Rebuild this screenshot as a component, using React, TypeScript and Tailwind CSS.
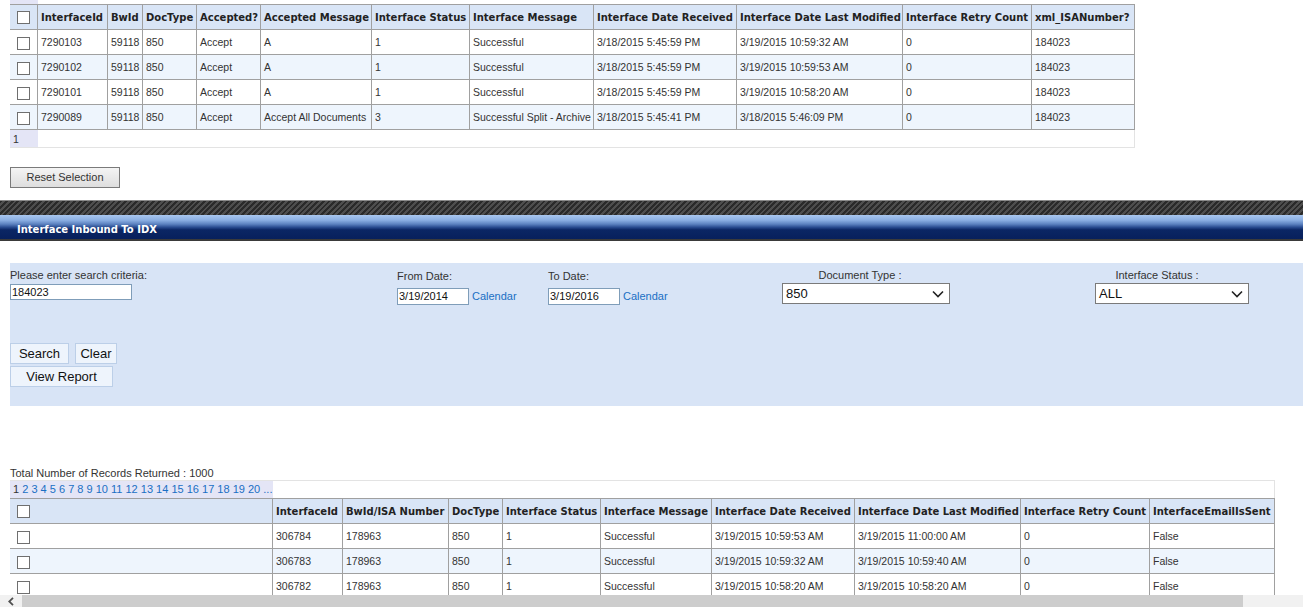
import React from "react";

const topCols = [
  "w-[28px]", "w-[70px]", "w-[35px]", "w-[54px]", "w-[64px]", "w-[111px]",
  "w-[98px]", "w-[124px]", "w-[143px]", "w-[166px]", "w-[129px]", "w-[103px]",
];
const topHeaders = [
  "InterfaceId", "BwId", "DocType", "Accepted?", "Accepted Message", "Interface Status",
  "Interface Message", "Interface Date Received", "Interface Date Last Modified",
  "Interface Retry Count", "xml_ISANumber?",
];
const topRows = [
  ["7290103", "59118", "850", "Accept", "A", "1", "Successful", "3/18/2015 5:45:59 PM", "3/19/2015 10:59:32 AM", "0", "184023"],
  ["7290102", "59118", "850", "Accept", "A", "1", "Successful", "3/18/2015 5:45:59 PM", "3/19/2015 10:59:53 AM", "0", "184023"],
  ["7290101", "59118", "850", "Accept", "A", "1", "Successful", "3/18/2015 5:45:59 PM", "3/19/2015 10:58:20 AM", "0", "184023"],
  ["7290089", "59118", "850", "Accept", "Accept All Documents", "3", "Successful Split - Archive", "3/18/2015 5:45:41 PM", "3/18/2015 5:46:09 PM", "0", "184023"],
];

const botCols = [
  "w-[263px]", "w-[70px]", "w-[106px]", "w-[54px]", "w-[98px]", "w-[111px]",
  "w-[143px]", "w-[166px]", "w-[129px]", "w-[125px]",
];
const botHeaders = [
  "InterfaceId", "BwId/ISA Number", "DocType", "Interface Status", "Interface Message",
  "Interface Date Received", "Interface Date Last Modified", "Interface Retry Count", "InterfaceEmailIsSent",
];
const botRows = [
  ["306784", "178963", "850", "1", "Successful", "3/19/2015 10:59:53 AM", "3/19/2015 11:00:00 AM", "0", "False"],
  ["306783", "178963", "850", "1", "Successful", "3/19/2015 10:59:32 AM", "3/19/2015 10:59:40 AM", "0", "False"],
  ["306782", "178963", "850", "1", "Successful", "3/19/2015 10:58:20 AM", "3/19/2015 10:58:20 AM", "0", "False"],
];

const thCls =
  "h-[26px] p-0 pl-[3px] border-t border-b border-r border-[#a0a0a0] bg-[#d9e5f6] text-left align-middle font-bold font-['DejaVu_Sans',sans-serif] text-[10px] text-[#222] whitespace-nowrap overflow-hidden";
const tdCls =
  "h-[25px] p-0 pt-[2px] pl-[3px] border-b border-r border-[#a0a0a0] text-left align-middle text-[10.5px] text-[#333] whitespace-nowrap overflow-hidden";

function Check() {
  return <span className="block w-[13px] h-[13px] border border-[#6f6f6f] bg-white" />;
}

function Chevron() {
  return (
    <svg width="12" height="8" viewBox="0 0 12 8" className="shrink-0">
      <polyline points="1,1.5 6,6.5 11,1.5" fill="none" stroke="#222" strokeWidth="1.6" />
    </svg>
  );
}

function Grid({
  cols, headers, rows,
}: { cols: string[]; headers: string[]; rows: string[][] }) {
  return (
    <table className="table-fixed border-separate border-spacing-0">
      <colgroup>
        {cols.map((c, i) => (
          <col key={i} className={c} />
        ))}
      </colgroup>
      <thead>
        <tr>
          <th className={thCls + " pl-[7px]"}>
            <Check />
          </th>
          {headers.map((h) => (
            <th key={h} className={thCls}>
              {h}
            </th>
          ))}
        </tr>
      </thead>
      <tbody>
        {rows.map((r, ri) => (
          <tr key={ri} className={ri % 2 === 1 ? "bg-[#eef5fd]" : "bg-white"}>
            <td className={tdCls + " pl-[7px]"}>
              <Check />
            </td>
            {r.map((v, ci) => (
              <td key={ci} className={tdCls}>
                {v}
              </td>
            ))}
          </tr>
        ))}
      </tbody>
    </table>
  );
}

export default function App() {
  const pages = ["2", "3", "4", "5", "6", "7", "8", "9", "10", "11", "12", "13", "14", "15", "16", "17", "18", "19", "20", "..."];
  return (
    <div className="w-[1303px] h-[607px] flex flex-col overflow-hidden bg-white font-['Liberation_Sans',Arial,sans-serif]">
      <div className="flex-1 overflow-hidden">
        {/* top grid */}
        <div className="pl-[10px]">
          <div className="h-[4px] w-[28px] bg-[#e4e5f6]" />
          <Grid cols={topCols} headers={topHeaders} rows={topRows} />
          <div className="flex w-[1125px] h-[18px] border-b border-r border-[#e3e3e3]">
            <div className="w-[28px] bg-[#e4e5f6] pl-[3px] pt-[1px] text-[10.5px] text-[#333] leading-[17px]">1</div>
          </div>
          <button className="mt-[19px] w-[110px] h-[21px] border border-[#7a7a7a] bg-[linear-gradient(to_bottom,#f4f4f4,#dedede)] text-[11px] text-[#333]">
            Reset Selection
          </button>
        </div>

        {/* section header */}
        <div className="mt-[12px] h-[15px] border-t border-[#8a8a8a] bg-[repeating-linear-gradient(135deg,#2a2a2a_0px,#2a2a2a_2px,#4e4e4e_2px,#4e4e4e_4px)]" />
        <div className="h-[24px] pl-[17px] pt-[9px] bg-[linear-gradient(to_bottom,#a9c7ef_0%,#8aaee2_22%,#5c82c0_38%,#26488c_52%,#0b2664_62%,#07205c_100%)]">
          <div className="font-['DejaVu_Sans',sans-serif] font-bold text-[10px] leading-[12px] text-white">
            Interface Inbound To IDX
          </div>
        </div>
        <div className="h-[2px] bg-[#3a3a3a]" />

        {/* search panel */}
        <div className="mt-[22px] ml-[10px] h-[143px] bg-[#d8e4f6] flex items-start">
          <div className="w-[387px] pt-[6px]">
            <div className="text-[11px] leading-[13px] text-[#333]">Please enter search criteria:</div>
            <div className="mt-[2px] w-[122px] h-[16px] border border-[#7f9db9] bg-white text-[11px] leading-[14px] pl-[1px] text-[#111]">
              184023
            </div>
            <div className="mt-[43px] flex gap-[6px]">
              <button className="w-[59px] h-[21px] border border-[#bccfe8] bg-[#eef4fc] text-[13px] text-[#111]">Search</button>
              <button className="w-[42px] h-[21px] border border-[#bccfe8] bg-[#eef4fc] text-[13px] text-[#111]">Clear</button>
            </div>
            <button className="mt-[1px] w-[103px] h-[21px] border border-[#bccfe8] bg-[#eef4fc] text-[13px] text-[#111]">View Report</button>
          </div>
          <div className="w-[151px] pt-[7px]">
            <div className="text-[11px] leading-[13px] text-[#333]">From Date:</div>
            <div className="mt-[5px] flex items-center">
              <div className="w-[72px] h-[17px] border border-[#7f9db9] bg-white text-[11px] leading-[15px] pl-[1px] text-[#111]">3/19/2014</div>
              <span className="ml-[3px] text-[11px] leading-[13px] text-[#1a6fc4]">Calendar</span>
            </div>
          </div>
          <div className="w-[234px] pt-[7px]">
            <div className="text-[11px] leading-[13px] text-[#333]">To Date:</div>
            <div className="mt-[5px] flex items-center">
              <div className="w-[72px] h-[17px] border border-[#7f9db9] bg-white text-[11px] leading-[15px] pl-[1px] text-[#111]">3/19/2016</div>
              <span className="ml-[3px] text-[11px] leading-[13px] text-[#1a6fc4]">Calendar</span>
            </div>
          </div>
          <div className="w-[313px] pt-[6px]">
            <div className="w-[156px] text-center text-[11px] leading-[13px] text-[#333]">Document Type :</div>
            <div className="mt-[1px] w-[168px] h-[21px] border border-[#7a7a7a] bg-white flex items-center justify-between pl-[3px] pr-[5px]">
              <span className="text-[13px] text-[#111]">850</span>
              <Chevron />
            </div>
          </div>
          <div className="pt-[6px]">
            <div className="w-[124px] text-center text-[11px] leading-[13px] text-[#333]">Interface Status :</div>
            <div className="mt-[1px] w-[154px] h-[21px] border border-[#7a7a7a] bg-white flex items-center justify-between pl-[3px] pr-[5px]">
              <span className="text-[13px] text-[#111]">ALL</span>
              <Chevron />
            </div>
          </div>
        </div>

        {/* results */}
        <div className="pl-[10px]">
          <div className="mt-[61px] text-[11px] leading-[13px] text-[#333]">Total Number of Records Returned : 1000</div>
          <div className="flex w-[1265px] h-[18px] border-t border-r border-[#e3e3e3]">
            <div className="w-[263px] bg-[#e4e5f6] pl-[3px] text-[11px] leading-[17px] whitespace-nowrap">
              <span className="text-[#333]">1</span>
              {pages.map((p) => (
                <span key={p} className="text-[#1a6fc4]">
                  {" "}
                  {p}
                </span>
              ))}
            </div>
          </div>
          <Grid cols={botCols} headers={botHeaders} rows={botRows} />
        </div>
      </div>

      {/* horizontal scrollbar */}
      <div className="h-[12px] flex shrink-0">
        <div className="w-[22px] bg-[#f1f1f1] flex items-center justify-center">
          <svg width="6" height="9" viewBox="0 0 6 9">
            <polyline points="5,0.8 1.2,4.5 5,8.2" fill="none" stroke="#505050" strokeWidth="1.8" />
          </svg>
        </div>
        <div className="w-[1221px] bg-[#cdcdcd]" />
        <div className="flex-1 bg-[#f1f1f1]" />
      </div>
    </div>
  );
}
